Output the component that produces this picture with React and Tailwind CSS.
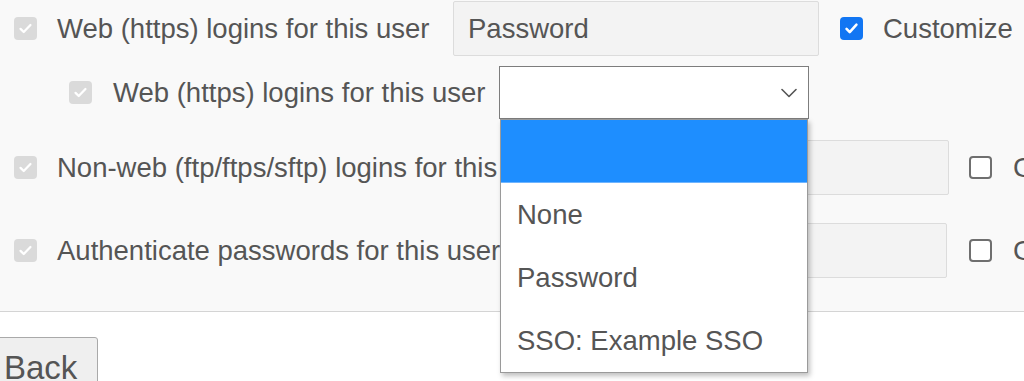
import React from 'react';

function Box({ kind }) {
  if (kind === 'disabled') {
    return (
      <span className="flex h-[23px] w-[23px] shrink-0 items-center justify-center rounded-[4px] bg-[#dadada]">
        <svg width="17" height="17" viewBox="0 0 24 24" fill="none" stroke="#fff" strokeWidth="3.2" strokeLinecap="round" strokeLinejoin="round">
          <path d="M5 12.5l4.5 4.5L19 7" />
        </svg>
      </span>
    );
  }
  if (kind === 'checked') {
    return (
      <span className="flex h-[23px] w-[23px] shrink-0 items-center justify-center rounded-[4px] bg-[#1276f3]">
        <svg width="17" height="17" viewBox="0 0 24 24" fill="none" stroke="#fff" strokeWidth="3.6" strokeLinecap="round" strokeLinejoin="round">
          <path d="M5 12.5l4.5 4.5L19 6.5" />
        </svg>
      </span>
    );
  }
  return <span className="block h-[23px] w-[23px] shrink-0 rounded-[4px] border-2 border-[#6f6f6f] bg-white" />;
}

const OPTIONS = ['None', 'Password', 'SSO: Example SSO'];

export default function App() {
  return (
    <div className="h-[381px] w-[1024px] overflow-hidden bg-white font-['Liberation_Sans',Arial,sans-serif] text-[27.5px] leading-none text-[#555]">
      <div className="h-[312px] border-b border-[#d4d4d4] bg-[#f9f9f9] pt-[1px]">
        {/* row 1 */}
        <div className="flex h-[55px] items-center pl-[14px]">
          <Box kind="disabled" />
          <span className="ml-[20px] w-[396px] shrink-0 whitespace-nowrap">Web (https) logins for this user</span>
          <div className="flex h-[55px] w-[366px] shrink-0 items-center rounded-[2px] border border-[#dcdcdc] bg-[#f3f3f3] pl-[14px]">Password</div>
          <span className="ml-[21px] shrink-0"><Box kind="checked" /></span>
          <span className="ml-[20px] shrink-0 whitespace-nowrap">Customize</span>
        </div>

        {/* row 2 */}
        <div className="mt-[10px] flex h-[53px] items-center pl-[69px]">
          <Box kind="disabled" />
          <span className="ml-[21px] w-[386px] shrink-0 whitespace-nowrap">Web (https) logins for this user</span>
          <div className="relative h-[53px] w-[310px] shrink-0">
            <div className="flex h-full w-full items-center justify-end border border-[#7d7d7d] bg-white pr-[11px]">
              <svg width="16" height="10" viewBox="0 0 16 10" fill="none" stroke="#555" strokeWidth="1.6" strokeLinecap="round" strokeLinejoin="round">
                <path d="M1 1.5l7 7 7-7" />
              </svg>
            </div>
            <div className="absolute left-[1px] top-full z-10 w-[308px] border border-[#9a9a9a] bg-white shadow-[2px_3px_5px_rgba(0,0,0,0.25)]">
              <div className="h-[63px] border-b border-[#6fb5ff] bg-[#1e8eff]" />
              {OPTIONS.map((opt) => (
                <div key={opt} className="flex h-[63px] items-center whitespace-nowrap pl-[16px]">
                  {opt}
                </div>
              ))}
            </div>
          </div>
        </div>

        {/* row 3 */}
        <div className="mt-[21px] flex h-[55px] items-center pl-[14px]">
          <Box kind="disabled" />
          <span className="ml-[20px] w-[526px] shrink-0 whitespace-nowrap">Non-web (ftp/ftps/sftp) logins for this user</span>
          <div className="h-[55px] w-[366px] shrink-0 rounded-[2px] border border-[#dcdcdc] bg-[#f3f3f3]" />
          <span className="ml-[20px] shrink-0"><Box kind="unchecked" /></span>
          <span className="ml-[21px] shrink-0 whitespace-nowrap">Customize</span>
        </div>

        {/* row 4 */}
        <div className="mt-[28px] flex h-[55px] items-center pl-[14px]">
          <Box kind="disabled" />
          <span className="ml-[20px] w-[526px] shrink-0 whitespace-nowrap">Authenticate passwords for this user</span>
          <div className="h-[55px] w-[364px] shrink-0 rounded-[2px] border border-[#dcdcdc] bg-[#f3f3f3]" />
          <span className="ml-[22px] shrink-0"><Box kind="unchecked" /></span>
          <span className="ml-[21px] shrink-0 whitespace-nowrap">Customize</span>
        </div>
      </div>

      <div className="pt-[25px]">
        <button className="-ml-[10px] h-[60px] rounded-[3px] border border-[#a9a9a9] bg-[#efefef] pl-[13px] pr-[20px] text-[33px] text-[#555]">
          Back
        </button>
      </div>
    </div>
  );
}
